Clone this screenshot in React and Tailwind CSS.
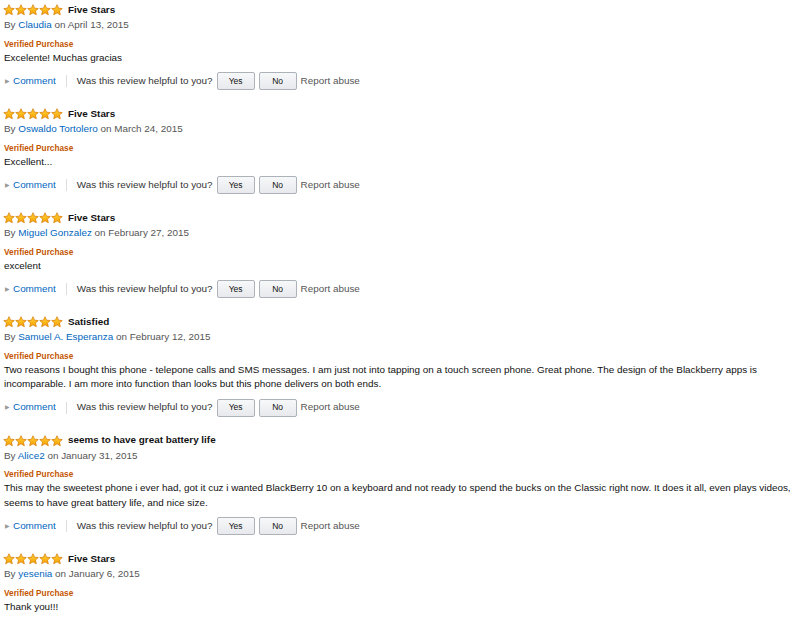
const reviews = [
  { title: 'Five Stars', author: 'Claudia', date: 'April 13, 2015', body: 'Excelente! Muchas gracias' },
  { title: 'Five Stars', author: 'Oswaldo Tortolero', date: 'March 24, 2015', body: 'Excellent...' },
  { title: 'Five Stars', author: 'Miguel Gonzalez', date: 'February 27, 2015', body: 'excelent' },
  {
    title: 'Satisfied',
    author: 'Samuel A. Esperanza',
    date: 'February 12, 2015',
    body: 'Two reasons I bought this phone - telepone calls and SMS messages. I am just not into tapping on a touch screen phone. Great phone. The design of the Blackberry apps is incomparable. I am more into function than looks but this phone delivers on both ends.',
  },
  {
    title: 'seems to have great battery life',
    author: 'Alice2',
    date: 'January 31, 2015',
    body: 'This may the sweetest phone i ever had, got it cuz i wanted BlackBerry 10 on a keyboard and not ready to spend the bucks on the Classic right now. It does it all, even plays videos, seems to have great battery life, and nice size.',
  },
  { title: 'Five Stars', author: 'yesenia', date: 'January 6, 2015', body: 'Thank you!!!', last: true },
];

function Star() {
  return (
    <svg width="12" height="12" viewBox="0 0 24 24">
      <defs>
        <linearGradient id="sg" x1="0" y1="0" x2="0" y2="1">
          <stop offset="0" stopColor="#ffd23a" />
          <stop offset="1" stopColor="#f7a000" />
        </linearGradient>
      </defs>
      <path
        d="M12 1.5l3.1 6.9 7.4.7-5.6 5 1.7 7.4L12 17.6 5.4 21.5l1.7-7.4-5.6-5 7.4-.7z"
        fill="url(#sg)"
        stroke="#d9820b"
        strokeWidth="1.6"
        strokeLinejoin="round"
      />
    </svg>
  );
}

function Stars() {
  return (
    <div className="flex ml-[-1px]">
      {[0, 1, 2, 3, 4].map(i => <Star key={i} />)}
    </div>
  );
}

function VoteButton({ label }) {
  return (
    <button className="h-[18px] w-[38px] rounded-[2px] border border-[#adb1b8] bg-gradient-to-b from-[#f7f8fa] to-[#e7e9ec] text-[8.5px] text-[#111] leading-none">
      {label}
    </button>
  );
}

function Review({ r }) {
  return (
    <div className={r.last ? '' : 'mb-[16px]'}>
      <div className="flex items-center gap-[5px] h-[16px]">
        <Stars />
        <span className="font-bold text-[9.9px] text-[#111]">{r.title}</span>
      </div>
      <div className="text-[9.9px] leading-[14.5px] text-[#555]">
        By <span className="text-[#0066c0]">{r.author}</span> on {r.date}
      </div>
      <div className="mt-[6px] text-[8.25px] leading-[12px] font-bold text-[#c45500]">Verified Purchase</div>
      <div className="text-[9.9px] leading-[14.5px] text-[#111]">{r.body}</div>
      {!r.last && (
        <div className="mt-[7px] flex items-center h-[18px] text-[9.9px]">
          <span className="text-[#999] text-[6px] ml-[1px] mr-[3px]">▶</span>
          <span className="text-[#0066c0]">Comment</span>
          <span className="mx-[10px] h-[12px] w-px bg-[#ddd]" />
          <span className="text-[#333] mr-[4px]">Was this review helpful to you?</span>
          <div className="flex gap-[4px]">
            <VoteButton label="Yes" />
            <VoteButton label="No" />
          </div>
          <span className="ml-[4px] text-[#555]">Report abuse</span>
        </div>
      )}
    </div>
  );
}

export default function App() {
  return (
    <div
      className="w-[800px] h-[617px] overflow-hidden bg-white pt-[2px] pl-[4px]"
      style={{ fontFamily: '"Liberation Sans", Arial, sans-serif' }}
    >
      {reviews.map((r, i) => <Review key={i} r={r} />)}
    </div>
  );
}
